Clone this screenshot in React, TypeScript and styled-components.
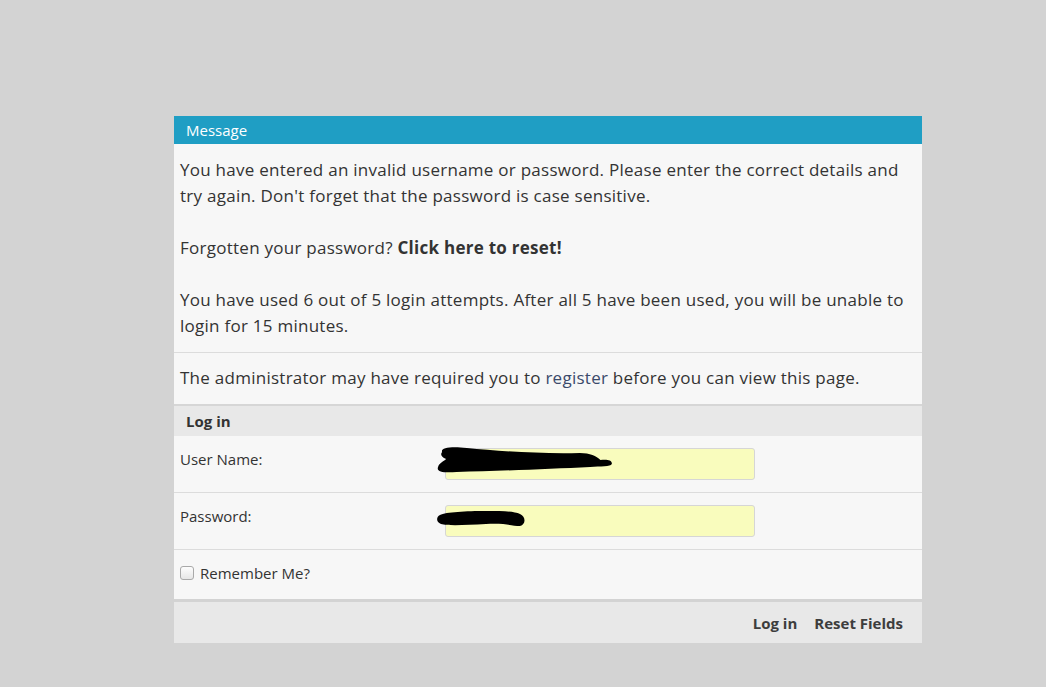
import React from "react";
import styled, { createGlobalStyle } from "styled-components";

const GlobalStyle = createGlobalStyle`
html, body {
  margin: 0;
  padding: 0;
  background: #d3d3d3;
  font-family: "Open Sans", "Noto Sans", sans-serif;
  color: #333;
}
`;

const Page = styled.div`
  min-height: 687px;
  padding-top: 116px;
  padding-left: 174px;
  box-sizing: border-box;
`;

const Panel = styled.div`
  width: 748px;
  background: #f7f7f7;
`;

const Header = styled.div`
  height: 28px;
  line-height: 28px;
  background: #1f9ec4;
  color: #fff;
  font-size: 15px;
  padding-left: 12px;
`;

const MessageBody = styled.div`
  padding: 13px 6px 13px 6px;
  font-size: 17px;
  letter-spacing: 0.26px;
  line-height: 26px;
  border-bottom: 1px solid #dcdcdc;
`;

const Para = styled.p`
  margin: 0 0 26px 0;
  &:last-child {
    margin-bottom: 0;
  }
`;

const Notice = styled.div`
  padding: 12px 6px 13px 6px;
  font-size: 17px;
  letter-spacing: 0.26px;
  line-height: 26px;
  border-bottom: 2px solid #d6d6d6;
`;

const Link = styled.a`
  color: #3b4a6b;
  text-decoration: none;
`;

const SectionTitle = styled.div`
  height: 30px;
  line-height: 30px;
  background: #e8e8e8;
  padding-left: 12px;
  font-size: 15px;
  font-weight: 700;
`;

const FieldRow = styled.div`
  display: grid;
  grid-template-columns: 265px 310px;
  align-items: center;
  height: 56px;
  padding-left: 6px;
  border-bottom: 1px solid #dcdcdc;
  font-size: 15px;
`;

const Label = styled.span`
  align-self: start;
  padding-top: 13px;
  line-height: 20px;
`;

const InputWrap = styled.div`
  position: relative;
  height: 32px;
`;

const Input = styled.div`
  height: 32px;
  box-sizing: border-box;
  background: #f9fcbd;
  border: 1px solid #d6d6d6;
  border-radius: 3px;
`;

const Scribble = styled.svg`
  position: absolute;
  left: -9px;
  top: -2px;
  overflow: visible;
`;

const CheckRow = styled.label`
  display: flex;
  align-items: center;
  gap: 6px;
  height: 49px;
  box-sizing: border-box;
  padding: 0 0 3px 6px;
  font-size: 15px;
`;

const Box = styled.span`
  width: 12px;
  height: 12px;
  border: 1px solid #a9a9a9;
  border-radius: 3px;
  background: linear-gradient(#fdfdfd, #e6e6e6);
`;

const Footer = styled.div`
  display: flex;
  justify-content: flex-end;
  align-items: center;
  gap: 17px;
  height: 41px;
  padding-right: 19px;
  border-top: 3px solid #d3d3d3;
  background: #e8e8e8;
  font-size: 15px;
  font-weight: 700;
  color: #3d3d3d;
`;

const Action = styled.span`
  cursor: pointer;
`;

export default function App() {
  return (
    <>
      <GlobalStyle />
      <Page>
        <Panel>
          <Header>Message</Header>
          <MessageBody>
            <Para>
              You have entered an invalid username or password. Please enter the correct details and
              try again. Don't forget that the password is case sensitive.
            </Para>
            <Para>
              Forgotten your password? <b>Click here to reset!</b>
            </Para>
            <Para>
              You have used 6 out of 5 login attempts. After all 5 have been used, you will be unable to
              login for 15 minutes.
            </Para>
          </MessageBody>
          <Notice>
            The administrator may have required you to <Link>register</Link> before you can view this page.
          </Notice>
          <SectionTitle>Log in</SectionTitle>
          <FieldRow>
            <Label>User Name:</Label>
            <InputWrap>
              <Input />
              <Scribble width="185" height="30" viewBox="0 0 180 30" preserveAspectRatio="none">
                <path
                  d="M6 6 C4 2 14 0 30 2 C60 5 100 8 140 7 C150 7 156 10 160 14 C166 13 172 14 171 18 C170 21 160 20 150 21 C110 23 60 25 20 26 C8 27 0 26 2 21 C3 17 8 15 10 13 C5 11 4 8 6 6 Z"
                  fill="#000"
                />
              </Scribble>
            </InputWrap>
          </FieldRow>
          <FieldRow>
            <Label>Password:</Label>
            <InputWrap>
              <Input />
              <Scribble width="100" height="30" viewBox="0 0 100 30">
                <path
                  d="M4 12 C10 9 30 8 50 8 C66 8 78 8 84 11 C90 14 90 21 84 23 C76 23 70 20 50 21 C30 22 12 23 5 21 C0 19 0 14 4 12 Z"
                  fill="#000"
                />
              </Scribble>
            </InputWrap>
          </FieldRow>
          <CheckRow>
            <Box />
            Remember Me?
          </CheckRow>
          <Footer>
            <Action>Log in</Action>
            <Action>Reset Fields</Action>
          </Footer>
        </Panel>
      </Page>
    </>
  );
}
